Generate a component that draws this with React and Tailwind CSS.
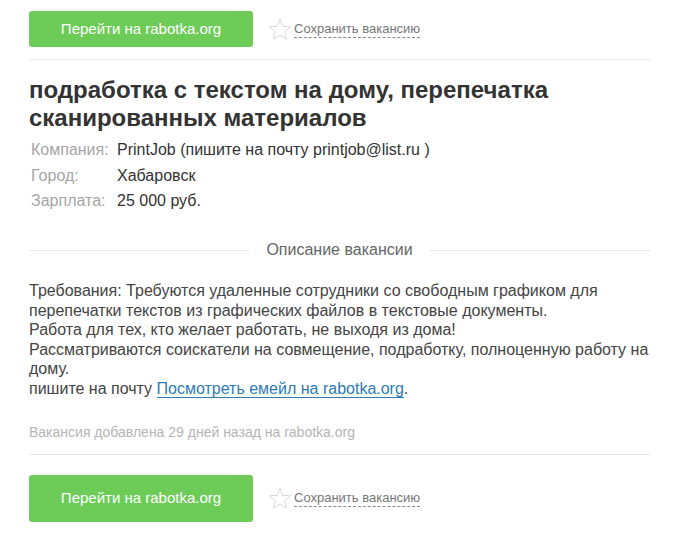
const font = { fontFamily: '"Liberation Sans", Arial, sans-serif' };

function Star() {
  return (
    <svg width="24" height="23" viewBox="0 0 24 23" className="shrink-0">
      <path
        d="M12 1.2 L14.9 8.4 L22.6 8.8 L16.6 13.7 L18.6 21.2 L12 17 L5.4 21.2 L7.4 13.7 L1.4 8.8 L9.1 8.4 Z"
        fill="none"
        stroke="#d9d9d9"
        strokeWidth="1"
        strokeLinejoin="round"
      />
    </svg>
  );
}

function Actions({ tall }) {
  return (
    <div className="flex items-center">
      <a
        className={`flex w-[224px] items-center justify-center rounded-[3px] bg-[#6dcb57] text-[15px] text-white ${
          tall ? "h-[47px]" : "h-[36px]"
        }`}
      >
        Перейти на rabotka.org
      </a>
      <div className="ml-[15px] flex items-center gap-[2px]">
        <Star />
        <span className="border-b border-dashed border-[#8a8a8a] text-[13px] leading-[16px] text-[#777]">
          Сохранить вакансию
        </span>
      </div>
    </div>
  );
}

export default function App() {
  return (
    <div className="min-h-[543px] bg-white px-[29px] text-[#333]" style={font}>
      <div className="pt-[11px]">
        <Actions />
      </div>
      <div className="mt-[12px] h-px bg-[#e8e8e8]" />

      <h1 className="mt-[16px] text-[24px] font-bold leading-[28px] text-[#333]">
        подработка с текстом на дому, перепечатка сканированных материалов
      </h1>

      <div className="mt-[8px] flex flex-col gap-[5.5px] pl-[2px] text-[16px] leading-[20px]">
        <div className="flex">
          <span className="w-[86px] text-[#a5a5a5]">Компания:</span>
          <span>PrintJob (пишите на почту printjob@list.ru )</span>
        </div>
        <div className="flex">
          <span className="w-[86px] text-[#a5a5a5]">Город:</span>
          <span>Хабаровск</span>
        </div>
        <div className="flex">
          <span className="w-[86px] text-[#a5a5a5]">Зарплата:</span>
          <span>25 000 руб.</span>
        </div>
      </div>

      <div className="mt-[27px] flex items-center gap-[17px]">
        <div className="h-px flex-1 bg-[#e8e8e8]" />
        <span className="text-[16px] text-[#666]">Описание вакансии</span>
        <div className="h-px flex-1 bg-[#e8e8e8]" />
      </div>

      <div className="mt-[19px] text-[16px] leading-[19.5px] text-[#444]">
        Требования: Требуются удаленные сотрудники со свободным графиком для
        перепечатки текстов из графических файлов в текстовые документы.
        <br />
        Работа для тех, кто желает работать, не выходя из дома!
        <br />
        Рассматриваются соискатели на совмещение, подработку, полноценную работу на
        дому.
        <br />
        пишите на почту{" "}
        <a className="border-b border-[#2d7bb5] text-[#2d7bb5]">Посмотреть емейл на rabotka.org</a>.
      </div>

      <div className="mt-[24px] text-[14px] text-[#b5b5b5]">
        Вакансия добавлена 29 дней назад на rabotka.org
      </div>
      <div className="mt-[11px] h-px bg-[#e8e8e8]" />

      <div className="mt-[20px]">
        <Actions tall />
      </div>
    </div>
  );
}
